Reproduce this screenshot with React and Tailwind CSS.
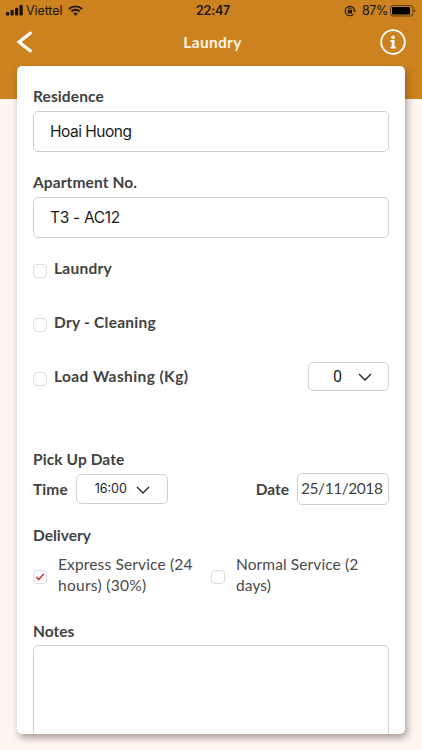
// Laundry booking screen

const Label = ({ children, className = "" }) => (
  <span
    className={`block whitespace-nowrap font-[Lato,sans-serif] text-[15.5px] leading-5 font-bold text-[#424242] ${className}`}
  >
    {children}
  </span>
);

const Checkbox = ({ checked }) => (
  <span className="flex size-[14px] shrink-0 items-center justify-center rounded-[4px] border border-[#dcdcdc] bg-white">
    {checked && (
      <svg viewBox="0 0 12 12" className="size-3" fill="none" stroke="#d0393e" strokeWidth="1.6">
        <path d="M2.3 6 4.7 8.6 9.8 2.8" />
      </svg>
    )}
  </span>
);

const Chevron = () => (
  <svg viewBox="0 0 14 8" className="h-2 w-[14px] shrink-0" fill="none" stroke="#222" strokeWidth="1.3">
    <path d="M1 1 7 7 13 1" />
  </svg>
);

const TextField = ({ children, className = "" }) => (
  <div
    className={`flex h-[41px] items-center rounded-[5px] border border-[#cfcfcf] pl-4 font-[Inter,sans-serif] text-[15.5px] text-[#1c1c1c] ${className}`}
  >
    {children}
  </div>
);

const StatusBar = () => (
  <div className="flex h-[21px] items-center font-[Inter,sans-serif] text-[12.5px] leading-none text-[#1b1206]">
    <svg viewBox="0 0 17 11" className="ml-[6px] h-[11px] w-[17px]" fill="currentColor">
      <rect x="0" y="7" width="3.2" height="3.6" rx=".8" />
      <rect x="4.5" y="5" width="3.2" height="5.6" rx=".8" />
      <rect x="9" y="2.8" width="3.2" height="7.8" rx=".8" />
      <rect x="13.5" y="0" width="3.2" height="10.6" rx=".8" />
    </svg>
    <span className="mt-px ml-[3px] w-[38px] tracking-[-0.1px] whitespace-nowrap">Viettel</span>
    <svg viewBox="0 0 15 11" className="ml-[4px] h-[11px] w-[15px]" fill="none" stroke="currentColor" strokeWidth="1.9">
      <path d="M1 4C4.6.5 10.4.5 14 4" />
      <path d="M3.4 6.5c2.3-2.3 5.9-2.3 8.2 0" />
      <path d="M7.5 10.8 5.3 8.5c1.2-1.2 3.2-1.2 4.4 0Z" fill="currentColor" stroke="none" />
    </svg>
    <span className="mt-px ml-[113px] w-[36px] font-semibold tracking-[-0.2px] whitespace-nowrap">22:47</span>
    <svg viewBox="0 0 12 12" className="ml-[112px] size-3" fill="none" stroke="currentColor" strokeWidth="1.1">
      <path d="M9.6 8.9A4.7 4.7 0 1 1 10.5 5.4" />
      <path d="M9 5.3h3L10.5 7.5Z" fill="currentColor" stroke="none" />
      <rect x="3.8" y="5.2" width="4.2" height="3.2" fill="currentColor" stroke="none" />
      <path d="M4.7 5.3V4.2a1.2 1.2 0 0 1 2.4 0v1.1" strokeWidth=".9" />
    </svg>
    <span className="mt-px ml-[6px] w-[27px] tracking-[-0.4px] whitespace-nowrap">87%</span>
    <svg viewBox="0 0 27 12" className="ml-[1px] h-3 w-[27px]">
      <rect x=".5" y=".5" width="22.5" height="10.5" rx="2.5" fill="none" stroke="#5c3a0e" />
      <rect x="2" y="2" width="18" height="7.5" rx="1" fill="#000" />
      <path d="M24.3 4c1.6.6 1.6 3 0 3.6Z" fill="#5c3a0e" />
    </svg>
  </div>
);

const App = () => {
  return (
    <div className="h-[750px] w-[422px] overflow-hidden bg-[#fef6f0]">
      <header className="h-[99px] bg-[#cb821f]">
        <StatusBar />
        <div className="flex h-[42px] items-center justify-between pr-4 pl-[16px]">
          <svg viewBox="0 0 18 22" className="h-[22px] w-[18px]" fill="none" stroke="#fff" strokeWidth="3.2" strokeLinecap="round">
            <path d="M14.2 2.2 3 11l11.2 8.8" />
          </svg>
          <h1 className="mt-[2px] ml-[11px] font-[Lato,sans-serif] text-[15.5px] font-bold tracking-[0.3px] text-[#fff4e2]">Laundry</h1>
          <svg viewBox="0 0 26 26" className="size-[26px]" fill="none" stroke="#fff">
            <circle cx="13" cy="13" r="11.8" strokeWidth="1.8" />
            <circle cx="13" cy="8.3" r="1.8" fill="#fff" stroke="none" />
            <path d="M10.5 11.1h4v6.7h1.3v1.8h-5.3v-1.8h1.2v-4.9h-1.2Z" fill="#fff" stroke="none" />
          </svg>
        </div>
      </header>

      <main className="relative mt-[-33px] ml-[17px] h-[668px] w-[388px] overflow-hidden rounded-[5px] bg-white px-4 pt-5 shadow-[2px_4px_7px_rgba(70,50,40,0.45)]">
        <Label className="tracking-[0.1px]">Residence</Label>
        <TextField className="mt-[5px] tracking-[-0.5px]">Hoai Huong</TextField>

        <Label className="mt-5 tracking-[0.1px]">Apartment No.</Label>
        <TextField className="mt-[5px] tracking-[-0.3px]">T3 - AC12</TextField>

        <div className="mt-5 flex h-5 items-center">
          <span className="mt-[5px]"><Checkbox /></span>
          <Label className="ml-[7px] tracking-[0.25px]">Laundry</Label>
        </div>
        <div className="mt-[34px] flex h-5 items-center">
          <span className="mt-[5px]"><Checkbox /></span>
          <Label className="ml-[7px] tracking-[0.25px]">Dry - Cleaning</Label>
        </div>
        <div className="mt-[34px] flex h-5 items-center">
          <span className="mt-[5px]"><Checkbox /></span>
          <Label className="ml-[7px] tracking-[0.4px]">Load Washing (Kg)</Label>
          <div className="ml-auto flex h-[29px] w-[81px] items-center rounded-[5px] border border-[#cfcfcf] pt-px pl-6 font-[Roboto,sans-serif] text-[16px] text-[#1c1c1c]">
            <span className="w-[25px]">0</span>
            <Chevron />
          </div>
        </div>

        <Label className="mt-[63px] tracking-[0.1px]">Pick Up Date</Label>
        <div className="mt-[4px] flex h-8 items-center">
          <Label className="tracking-[0.1px]">Time</Label>
          <div className="ml-auto flex h-[30px] w-[92px] items-center rounded-[5px] border border-[#cfcfcf] pt-px pl-[18px] font-[Inter,sans-serif] text-[12.5px] text-[#1c1c1c]">
            <span className="w-[41px]">16:00</span>
            <Chevron />
          </div>
          <Label className="ml-[88px]">Date</Label>
          <div className="ml-[8px] flex h-8 w-[92px] items-center rounded-[5px] border border-[#cfcfcf] pl-[3px] font-[Lato,sans-serif] text-[15.5px] tracking-[-0.45px] text-[#424242]">
            25/11/2018
          </div>
        </div>

        <Label className="mt-5">Delivery</Label>
        <div className="mt-[9px] flex h-[42px] font-[Lato,sans-serif] text-[15.5px] leading-[21px] text-[#4a4a4a]">
          <span className="mt-4"><Checkbox checked /></span>
          <p className="ml-[11px] w-[153px] tracking-[0.15px] whitespace-nowrap">
            Express Service (24<br /><span className="tracking-[0.3px]">hours) (30%)</span>
          </p>
          <span className="mt-4"><Checkbox /></span>
          <p className="ml-[11px] tracking-[0.1px] whitespace-nowrap">Normal Service (2<br />days)</p>
        </div>

        <Label className="mt-[25px]">Notes</Label>
        <div className="mt-[4px] h-[120px] rounded-[5px] border border-[#cfcfcf]" />
      </main>
    </div>
  );
};

export default App;
